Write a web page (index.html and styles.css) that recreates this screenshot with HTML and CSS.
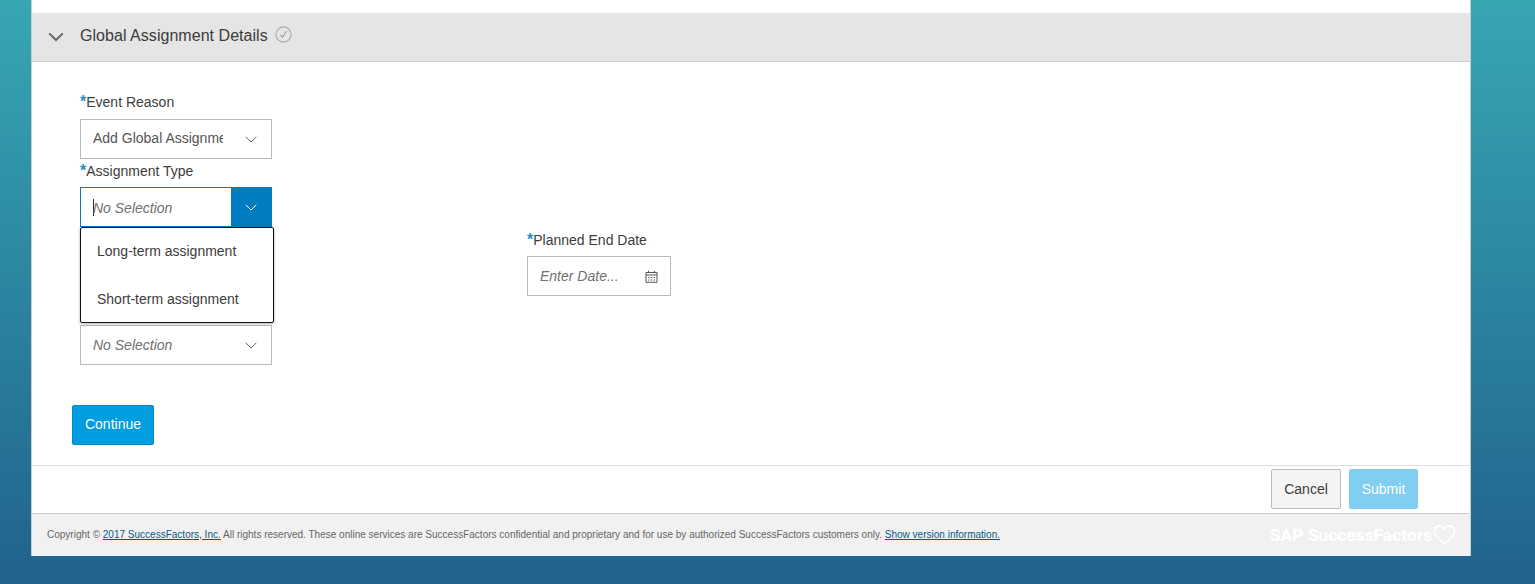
FILE: index.html
```html
<!DOCTYPE html>
<html lang="en">
<head>
<meta charset="utf-8">
<title>Global Assignment Details</title>
<link rel="stylesheet" href="styles.css">
</head>
<body>
<main class="panel">
  <section class="section">
    <header class="section-head">
      <svg class="collapse" width="16" height="10" viewBox="0 0 16 10"><path d="M1.2 1.4 8 8l6.8-6.6" fill="none" stroke="#666" stroke-width="2"/></svg>
      <h2 class="section-title">Global Assignment Details</h2>
      <svg class="status" width="17" height="17" viewBox="0 0 17 17"><circle cx="8.5" cy="8.5" r="7.6" fill="none" stroke="#aaa" stroke-width="1.1"/><path d="M5.3 8.8 7.6 11.2 11.6 5" fill="none" stroke="#999" stroke-width="1.1"/></svg>
    </header>
    <div class="form">
      <div class="columns">
        <div class="col-left">
          <label class="label"><span class="req">*</span>Event Reason</label>
          <div class="select">
            <span class="value clip">Add Global Assignment</span>
            <svg class="chev" width="12" height="7" viewBox="0 0 12 7"><path d="M.7.8 6 6 11.3.8" fill="none" stroke="#666" stroke-width="1"/></svg>
          </div>
          <label class="label label-type"><span class="req">*</span>Assignment Type</label>
          <div class="combo-wrap">
            <div class="select select-focus">
              <span class="caret"></span>
              <span class="value placeholder value-low">No Selection</span>
              <span class="chev-btn"><svg width="12" height="7" viewBox="0 0 12 7"><path d="M.7.8 6 6 11.3.8" fill="none" stroke="#fff" stroke-width="1"/></svg></span>
            </div>
            <ul class="menu">
              <li>Long-term assignment</li>
              <li>Short-term assignment</li>
            </ul>
          </div>
          <div class="select select-third">
            <span class="value placeholder">No Selection</span>
            <svg class="chev" width="12" height="7" viewBox="0 0 12 7"><path d="M.7.8 6 6 11.3.8" fill="none" stroke="#666" stroke-width="1"/></svg>
          </div>
        </div>
        <div class="col-right">
          <label class="label"><span class="req">*</span>Planned End Date</label>
          <div class="date">
            <span class="value placeholder">Enter Date...</span>
            <svg class="cal" width="13" height="13" viewBox="0 0 13 13"><path d="M1 2.5h11v9.8H1zM1 5h11M3.5.8v2.4M9.5.8v2.4" fill="none" stroke="#555" stroke-width="1"/><path d="M3 7h1.5v1H3zM5.8 7h1.5v1H5.8zM8.6 7h1.5v1H8.6zM3 9.5h1.5v1H3zM5.8 9.5h1.5v1H5.8zM8.6 9.5h1.5v1H8.6z" fill="#555"/></svg>
          </div>
        </div>
      </div>
      <button class="btn btn-continue" type="button">Continue</button>
    </div>
  </section>
  <div class="actions">
    <button class="btn btn-cancel" type="button">Cancel</button>
    <button class="btn btn-submit" type="button">Submit</button>
  </div>
  <footer class="footer">
    <p class="legal">Copyright © <a href="#">2017 SuccessFactors, Inc.</a> All rights reserved. These online services are SuccessFactors confidential and proprietary and for use by authorized SuccessFactors customers only. <a href="#">Show version information.</a></p>
    <div class="brand">
      <span class="brand-name">SAP SuccessFactors</span>
      <svg width="23" height="22" viewBox="0 0 24 22"><path d="M12 20.5 2.8 11.2C-.6 7.4 1.7 1.5 6.6 1.5c2.4 0 4.2 1.2 5.4 3.2 1.2-2 3-3.2 5.4-3.2 4.9 0 7.2 5.9 3.8 9.7z" fill="none" stroke="#fff" stroke-width="1.7"/></svg>
    </div>
  </footer>
</main>
</body>
</html>
```

FILE: styles.css
```css
* { box-sizing: border-box; }
html, body { height: 100%; }
body {
  margin: 0;
  height: 584px;
  overflow: hidden;
  background: linear-gradient(180deg, #37a7b2 0%, #20628d 100%);
  font-family: "Liberation Sans", Arial, sans-serif;
  color: #333;
}
.panel {
  width: 1440px;
  height: 556px;
  margin-left: 31px;
  padding-top: 13px;
  background: #fff;
  border-left: 1px solid #c8cdd0;
  border-right: 1px solid #c8cdd0;
  display: flex;
  flex-direction: column;
}
.section { flex: 1; display: flex; flex-direction: column; }
.section-head {
  height: 49px;
  flex: none;
  background: #e5e5e5;
  border-bottom: 1px solid #ccc;
  display: flex;
  align-items: center;
  padding: 0 0 5px 16px;
}
.collapse { margin-top: 5px; }
.section-title {
  margin: 2px 0 0 16px;
  font-size: 16px;
  font-weight: 400;
  letter-spacing: .04px;
  color: #3c3c3c;
}
.status { margin-left: 7px; }
.form { padding: 30px 0 0 40px; position: relative; flex: 1; }
.columns { display: flex; padding-left: 8px; }
.col-left { width: 447px; flex: none; }
.col-right { padding-top: 138px; }
.label {
  display: block;
  height: 20px;
  font-size: 14px;
  line-height: 20px;
  color: #3c3c3c;
  white-space: nowrap;
}
.req { color: #1b8fd0; font-size: 16px; font-weight: 700; letter-spacing: -.6px; margin-right: .6px; }
.select, .date {
  height: 40px;
  background: #fff;
  border: 1px solid #bbb;
  margin-top: 7px;
  display: flex;
  align-items: center;
  font-size: 14px;
  color: #555;
}
.select { width: 192px; padding-left: 12px; position: relative; }
.date { width: 144px; padding-left: 12px; margin-top: 6px; }
.label-type { margin-top: 2px; }
.value { white-space: nowrap; }
.clip { width: 130px; overflow: hidden; margin-bottom: 2px; }
.value-low { margin-top: 2px; }
.placeholder { font-style: italic; color: #707070; }
.chev { position: absolute; right: 14px; top: 16px; }
.combo-wrap { position: relative; margin-top: 6px; }
.select-focus { margin-top: 0; border-color: #0a7cc0; }
.caret { width: 1px; height: 17px; background: #333; margin-right: -1px; }
.chev-btn {
  position: absolute;
  right: -1px;
  top: -1px;
  width: 41px;
  height: 40px;
  padding-right: 1px;
  background: #007cc0;
  display: flex;
  align-items: center;
  justify-content: center;
}
.menu {
  position: absolute;
  left: 0;
  top: 40px;
  width: 194px;
  height: 96px;
  margin: 0;
  padding: 0;
  list-style: none;
  background: #fff;
  border: 1px solid #111;
  border-radius: 2px;
  box-shadow: 0 1px 3px rgba(0, 0, 0, .3);
  z-index: 2;
}
.menu li {
  height: 48px;
  padding-left: 16px;
  line-height: 46px;
  font-size: 14px;
  color: #3c3c3c;
}
.select-third { margin-top: 98px; }
.date .cal { margin-left: 26px; }
.btn {
  height: 40px;
  border-radius: 2px;
  font-family: inherit;
  font-size: 14px;
  padding: 0;
}
.btn-continue {
  display: block;
  width: 82px;
  margin-top: 40px;
  padding-bottom: 2px;
  background: #009de0;
  border: 1px solid #0088c8;
  color: #fff;
}
.actions {
  height: 49px;
  flex: none;
  border-top: 1px solid #ddd;
  border-bottom: 1px solid #ccc;
  display: flex;
  justify-content: flex-end;
  align-items: flex-start;
  gap: 8px;
  padding: 3px 52px 0 0;
}
.btn-cancel { width: 70px; background: #f4f4f4; border: 1px solid #bbb; color: #3c3c3c; }
.btn-submit { width: 69px; background: #80cef0; border: 1px solid #80cef0; color: #fff; }
.footer {
  height: 42px;
  flex: none;
  background: #f1f1f1;
  display: flex;
  align-items: center;
  justify-content: space-between;
  padding: 0 14px 0 15px;
}
.legal { margin: 0 0 2px; font-size: 10px; letter-spacing: .005px; color: #666; white-space: nowrap; }
.legal a { color: #005a8c; text-decoration: underline; }
.brand { display: flex; align-items: center; gap: 1px; color: #fff; }
.brand-name { font-family: Roboto, "Liberation Sans", sans-serif; font-size: 17.4px; font-weight: 700; }
```
